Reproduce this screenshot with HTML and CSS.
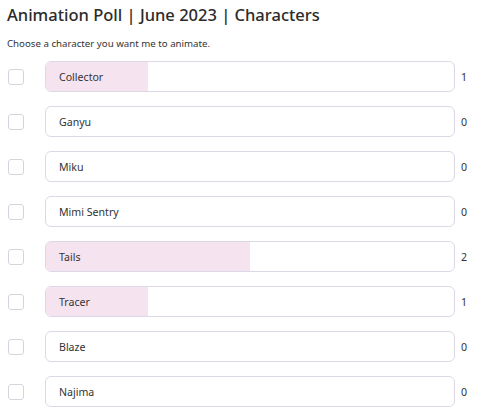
FILE: index.html
```html
<!DOCTYPE html>
<html>
<head>
<meta charset="utf-8">
<link rel="stylesheet" href="styles.css">
</head>
<body>
<div class="poll">
  <h1 class="title">Animation Poll | June 2023 | Characters</h1>
  <p class="subtitle">Choose a character you want me to animate.</p>
  <div class="options">
    <div class="row"><span class="check"></span><div class="bar"><div class="fill" style="width:25%"></div><span class="label">Collector</span></div><span class="count">1</span></div>
    <div class="row"><span class="check"></span><div class="bar"><div class="fill" style="width:0%"></div><span class="label">Ganyu</span></div><span class="count">0</span></div>
    <div class="row"><span class="check"></span><div class="bar"><div class="fill" style="width:0%"></div><span class="label">Miku</span></div><span class="count">0</span></div>
    <div class="row"><span class="check"></span><div class="bar"><div class="fill" style="width:0%"></div><span class="label">Mimi Sentry</span></div><span class="count">0</span></div>
    <div class="row"><span class="check"></span><div class="bar"><div class="fill" style="width:50%"></div><span class="label">Tails</span></div><span class="count">2</span></div>
    <div class="row"><span class="check"></span><div class="bar"><div class="fill" style="width:25%"></div><span class="label">Tracer</span></div><span class="count">1</span></div>
    <div class="row"><span class="check"></span><div class="bar"><div class="fill" style="width:0%"></div><span class="label">Blaze</span></div><span class="count">0</span></div>
    <div class="row"><span class="check"></span><div class="bar"><div class="fill" style="width:0%"></div><span class="label">Najima</span></div><span class="count">0</span></div>
  </div>
</div>
</body>
</html>
```
FILE: styles.css
```css
html, body {
  margin: 0;
  padding: 0;
  background: #ffffff;
}
body {
  font-family: "Noto Sans", "Open Sans", sans-serif;
  color: #2a2a2a;
}
.poll {
  padding: 4px 0 0 7px;
}
.title {
  margin: 0;
  font-size: 16.5px;
  font-weight: 500;
  line-height: 22px;
  color: #2b2b2b;
}
.subtitle {
  margin: 10px 0 0 0;
  font-size: 9.7px;
  line-height: 15px;
  color: #333;
}
.options {
  margin-top: 10px;
  display: flex;
  flex-direction: column;
  gap: 14px;
}
.row {
  display: flex;
  align-items: center;
  height: 31px;
}
.check {
  width: 14px;
  height: 14px;
  margin-left: 1px;
  margin-top: 1px;
  border: 1px solid #d6d3df;
  border-radius: 3px;
  flex: none;
}
.bar {
  position: relative;
  margin-left: 21px;
  width: 408px;
  height: 29px;
  border: 1px solid #dcd8e6;
  border-radius: 6px;
  overflow: hidden;
  display: flex;
  align-items: center;
  flex: none;
}
.fill {
  position: absolute;
  left: 0;
  top: 0;
  bottom: 0;
  background: #f5e3ef;
}
.label {
  position: relative;
  margin-left: 13px;
  font-size: 10.6px;
  color: #333;
}
.count {
  margin-left: 6px;
  font-size: 10.6px;
  color: #333;
}
```
